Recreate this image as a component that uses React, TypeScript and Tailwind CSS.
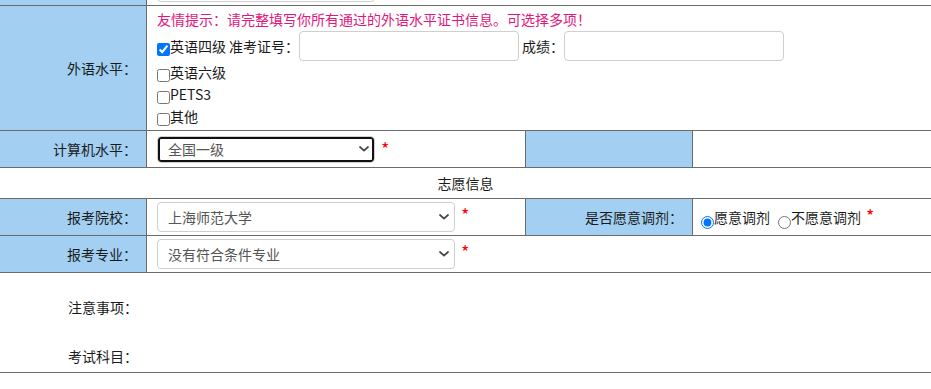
import React from 'react';

const line = 'border-[#6b6b6b]';
const labelCell = `w-[147px] shrink-0 border-r ${line} bg-[#a3d0f2] flex items-center justify-end pr-[9px]`;

const Chevron: React.FC = () => (
    <svg width="10" height="6" viewBox="0 0 10 6" className="shrink-0">
        <path d="M1 1 L5 4.6 L9 1" fill="none" stroke="#4a4a4a" strokeWidth="1.8" strokeLinecap="round" strokeLinejoin="round" />
    </svg>
);

// fake select box: grey border, grey text, chevron at the right
const SelectBox: React.FC<{ value: string; width: string; height: string; focused?: boolean }> = ({ value, width, height, focused }) => (
    <div
        className={`${width} ${height} flex items-center justify-between pl-[10px] pr-[5px] rounded-[4px] border border-[#cfcfcf] bg-white text-[#555] ${focused ? 'shadow-[inset_0_0_0_2px_#111]' : ''}`}
    >
        <span>{value}</span>
        <Chevron />
    </div>
);

const Star: React.FC<{ className?: string }> = ({ className = '' }) => (
    <span className={`text-[#ff0000] text-[18px] leading-[18px] self-start ${className}`}>*</span>
);

const TextBox: React.FC = () => (
    <div className="w-[220px] h-[30px] rounded-[4px] border border-[#cfcfcf] bg-white"></div>
);

const CheckLine: React.FC<{ text: string; checked?: boolean; children?: React.ReactNode }> = ({ text, checked, children }) => (
    <div className="flex items-center h-[22px]">
        <input type="checkbox" defaultChecked={checked} className="m-0 mt-[6px] size-[13px] shrink-0" />
        <span>{text}</span>
        {children}
    </div>
);

const App: React.FC = () => {
    return (
        <div className="w-[931px] h-[389px] bg-white text-[14px] text-[#1a1a1a] font-['Noto_Sans_CJK_SC','Liberation_Sans',sans-serif] overflow-hidden">
            {/* tail of the previous row */}
            <div className={`flex h-[6px] border-b ${line} overflow-hidden`}>
                <div className={`w-[147px] shrink-0 border-r ${line} bg-[#a3d0f2]`}></div>
                <div className="flex-1 pl-[10px]">
                    <div className="w-[218px] h-[30px] -mt-[28px] rounded-[4px] border border-[#cfcfcf]"></div>
                </div>
            </div>

            {/* 外语水平 */}
            <div className={`flex h-[125px] border-b ${line}`}>
                <div className={labelCell}>外语水平：</div>
                <div className="flex-1 pl-[10px] pt-[3px]">
                    <div className="h-[20px] leading-[20px] text-[#e0177c]">友情提示：请完整填写你所有通过的外语水平证书信息。可选择多项！</div>
                    <div className="flex items-center h-[30px] mt-[2px]">
                        <input type="checkbox" defaultChecked className="m-0 mt-[6px] size-[13px] shrink-0" />
                        <span>英语四级</span>
                        <span className="ml-[3px]">准考证号：</span>
                        <TextBox />
                        <span className="ml-[3px]">成绩：</span>
                        <TextBox />
                    </div>
                    <CheckLine text="英语六级" />
                    <CheckLine text="PETS3" />
                    <CheckLine text="其他" />
                </div>
            </div>

            {/* 计算机水平 */}
            <div className={`flex h-[37px] border-b ${line}`}>
                <div className={labelCell}>计算机水平：</div>
                <div className={`w-[379px] shrink-0 border-r ${line} flex items-center pl-[10px]`}>
                    <SelectBox value="全国一级" width="w-[218px]" height="h-[27px]" focused />
                    <Star className="ml-[6px] mt-[8px]" />
                </div>
                <div className={`w-[167px] shrink-0 border-r ${line} bg-[#a3d0f2]`}></div>
                <div className="flex-1"></div>
            </div>

            {/* 志愿信息 */}
            <div className={`h-[31px] border-b ${line} flex items-center justify-center`}>志愿信息</div>

            {/* 报考院校 */}
            <div className={`flex h-[37px] border-b ${line}`}>
                <div className={labelCell}>报考院校：</div>
                <div className={`w-[379px] shrink-0 border-r ${line} flex items-center pl-[10px]`}>
                    <SelectBox value="上海师范大学" width="w-[298px]" height="h-[30px]" />
                    <Star className="ml-[6px] mt-[6px]" />
                </div>
                <div className={`w-[167px] shrink-0 border-r ${line} bg-[#a3d0f2] flex items-center justify-end pr-[9px]`}>是否愿意调剂：</div>
                <div className="flex-1 flex items-center pl-[8px]">
                    <input type="radio" name="tj" defaultChecked className="m-0 mt-[10px] size-[13px] shrink-0" />
                    <span>愿意调剂</span>
                    <input type="radio" name="tj" className="m-0 mt-[10px] ml-[8px] size-[13px] shrink-0" />
                    <span>不愿意调剂</span>
                    <Star className="ml-[5px] mt-[7px]" />
                </div>
            </div>

            {/* 报考专业 */}
            <div className={`flex h-[37px] border-b ${line}`}>
                <div className={labelCell}>报考专业：</div>
                <div className="flex-1 flex items-center pl-[10px]">
                    <SelectBox value="没有符合条件专业" width="w-[298px]" height="h-[30px]" />
                    <Star className="ml-[6px] mt-[6px]" />
                </div>
            </div>

            {/* 注意事项 / 考试科目 */}
            <div className={`h-[100px] border-b ${line}`}>
                <div className="flex h-[68px]">
                    <div className="w-[147px] shrink-0 flex items-center justify-end pr-[9px]">注意事项：</div>
                </div>
                <div className="flex h-[31px]">
                    <div className="w-[147px] shrink-0 flex items-center justify-end pr-[9px]">考试科目：</div>
                </div>
            </div>
        </div>
    );
};

export default App;
